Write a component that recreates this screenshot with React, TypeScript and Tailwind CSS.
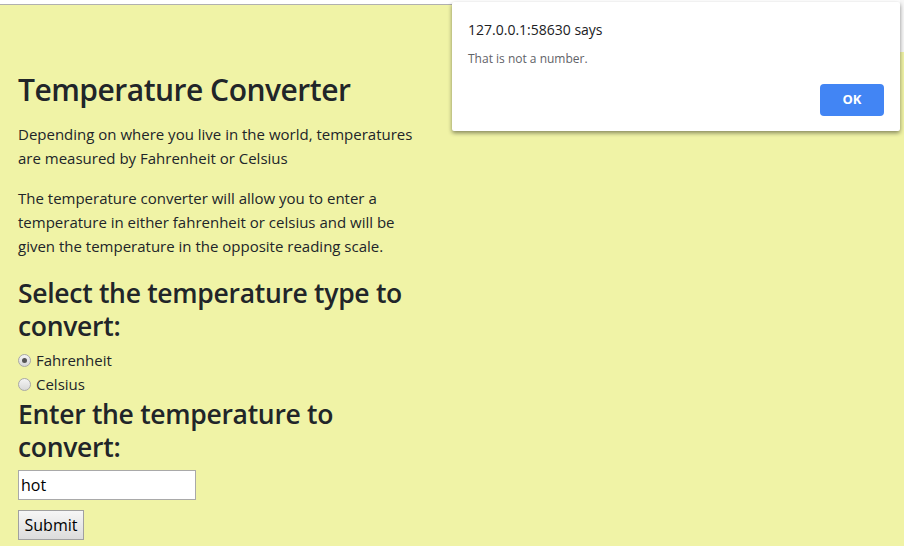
import React from "react";

const font = "font-['Open_Sans','Noto_Sans',sans-serif]";

function Radio({ checked }: { checked?: boolean }) {
  return (
    <span className="flex h-[13px] w-[13px] items-center justify-center rounded-full border border-[#a8a8a8] bg-gradient-to-b from-[#f4f4f4] to-[#d8d8d8]">
      {checked && <span className="h-[5px] w-[5px] rounded-full bg-[#555]" />}
    </span>
  );
}

export default function App() {
  return (
    <div className={`relative h-[546px] w-[904px] overflow-hidden bg-[#f0f3a6] text-[#212529] ${font}`}>
      <div className="h-[4px] bg-white" />
      <div className="h-px bg-[#b0b0b0]" />
      <div className="pl-[18px]">
        <h1 className="mt-[66px] text-[30px] leading-[38px] font-semibold tracking-[-0.5px]">Temperature Converter</h1>
        <p className="mt-[13px] text-[15px] leading-[24px]">
          Depending on where you live in the world, temperatures
          <br />
          are measured by Fahrenheit or Celsius
        </p>
        <p className="mt-[16px] text-[15px] leading-[24px]">
          The temperature converter will allow you to enter a
          <br />
          temperature in either fahrenheit or celsius and will be
          <br />
          given the temperature in the opposite reading scale.
        </p>
        <h3 className="mt-[19px] text-[26.5px] leading-[33px] font-semibold tracking-[-0.3px]">
          Select the temperature type to
          <br />
          convert:
        </h3>
        <div className="mt-[5px] flex flex-col text-[15px] leading-[24px]">
          <label className="flex items-center gap-[5px]">
            <Radio checked />
            <span>Fahrenheit</span>
          </label>
          <label className="flex items-center gap-[5px]">
            <Radio />
            <span>Celsius</span>
          </label>
        </div>
        <h3 className="mt-[2px] text-[26.5px] leading-[33px] font-semibold tracking-[-0.3px]">
          Enter the temperature to
          <br />
          convert:
        </h3>
        <div className="mt-[6px] flex h-[30px] w-[178px] items-center border border-[#a9a9a9] bg-white pl-[2px] text-[16px] text-black">
          hot
        </div>
        <div className="mt-[10px] flex h-[30px] w-[66px] items-center justify-center border border-[#a0a0a0] bg-gradient-to-b from-[#f6f6f6] to-[#dcdcdc] text-[16px] text-black">
          Submit
        </div>
      </div>

      <div className="absolute right-0 top-0 h-[52px] w-[4px] bg-[#f7f7f7]" />

      <div className="absolute left-[452px] top-[2px] h-[129px] w-[448px] rounded-[2px] bg-white shadow-[0_2px_4px_rgba(0,0,0,0.45)]">
        <div className="absolute left-[16px] top-[18px] text-[14px] leading-[20px] text-[#202124]">127.0.0.1:58630 says</div>
        <div className="absolute left-[16px] top-[48px] text-[12px] leading-[18px] text-[#5f6368]">That is not a number.</div>
        <div className="absolute left-[368px] top-[82px] flex h-[32px] w-[64px] items-center justify-center rounded-[4px] bg-[#4285f4] text-[13px] font-bold text-white">
          OK
        </div>
      </div>
    </div>
  );
}
